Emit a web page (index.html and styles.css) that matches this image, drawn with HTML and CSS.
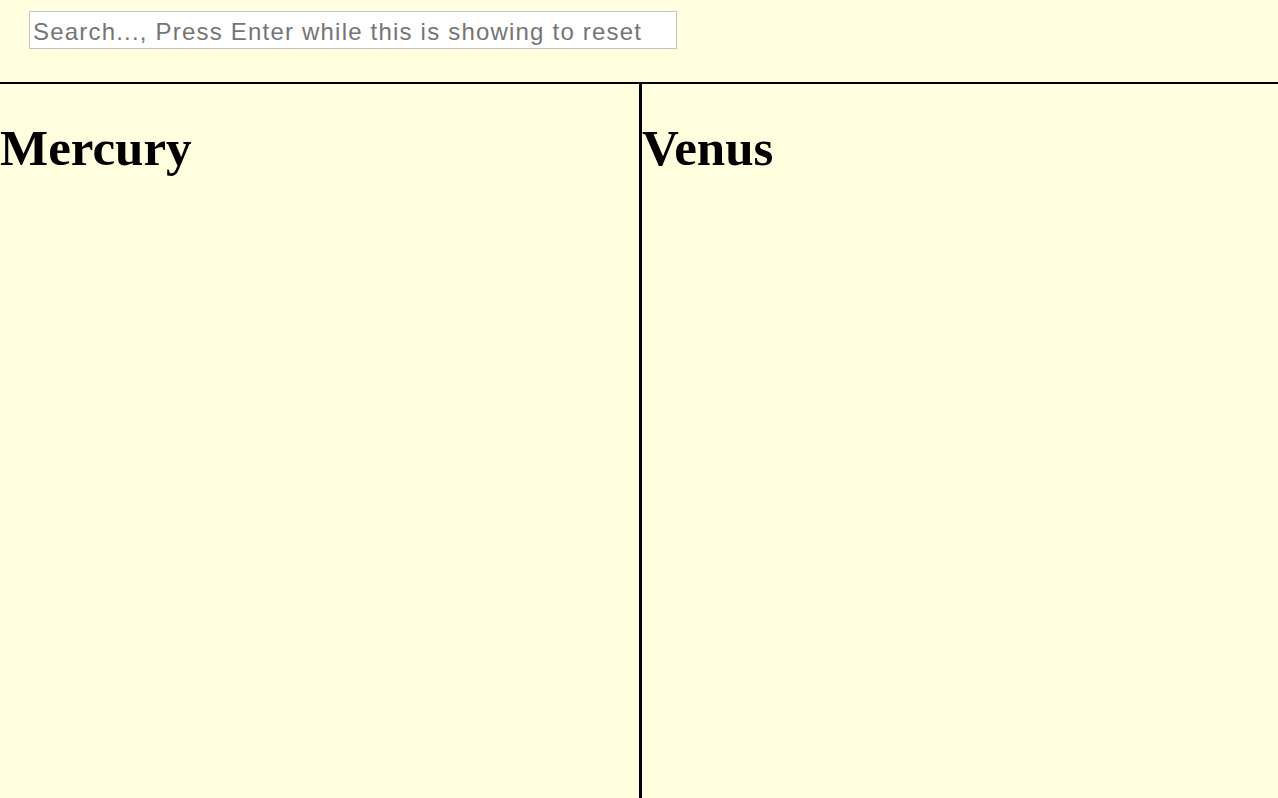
FILE: index.html
```html
<!DOCTYPE html>
<html>
<head>
<meta charset="utf-8">
<link rel="stylesheet" href="styles.css">
</head>
<body>
<header class="top">
  <input class="search" type="text" placeholder="Search..., Press Enter while this is showing to reset">
</header>
<main class="columns">
  <section class="col col-left"><h1 class="title">Mercury</h1></section>
  <section class="col"><h1 class="title">Venus</h1></section>
</main>
</body>
</html>
```
FILE: styles.css
```css
html, body {
  margin: 0;
  height: 100%;
  background: #ffffe0;
}
body {
  display: flex;
  flex-direction: column;
  font-family: "Liberation Serif", serif;
}
.top {
  height: 82px;
  box-sizing: border-box;
  padding: 11px 0 0 29px;
}
.search {
  box-sizing: border-box;
  width: 648px;
  height: 38px;
  margin: 0;
  padding: 3px 3px 0 3px;
  border: 1px solid #c4c4c4;
  background: #fff;
  font-family: "Liberation Sans", Arial, sans-serif;
  font-size: 24px;
  letter-spacing: 1.2px;
  color: #333;
  outline: none;
}
.search::placeholder {
  color: #757575;
}
.columns {
  flex: 1;
  display: grid;
  grid-template-columns: 642px 1fr;
  border-top: 2px solid #000;
}
.col-left {
  border-right: 3px solid #000;
}
.title {
  margin: 35px 0 0 0;
  font-size: 51px;
  font-weight: bold;
  color: #000;
}
```
